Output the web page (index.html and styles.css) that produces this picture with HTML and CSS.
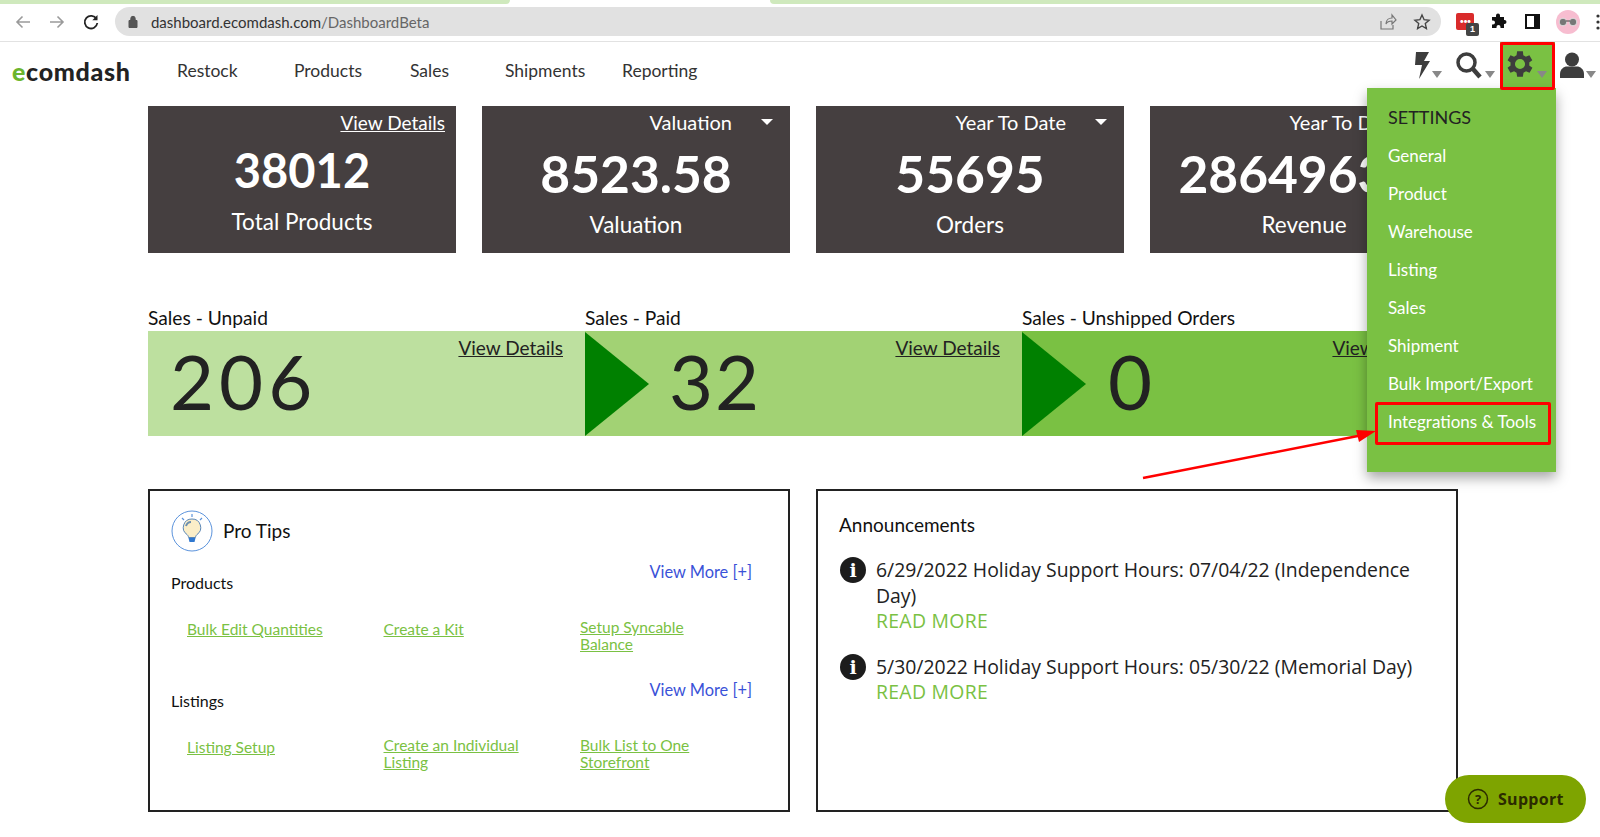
FILE: index.html
```html
<!DOCTYPE html>
<html lang="en">
<head>
<meta charset="utf-8">
<title>ecomdash Dashboard</title>
<link rel="stylesheet" href="styles.css">
</head>
<body>
<div class="tabstrip"><span class="tab-a"></span><span class="tab-b"></span></div>
<header class="chrome">
  <div class="chrome-nav">
    <svg class="ci" width="20" height="20" viewBox="0 0 20 20"><path d="M17 10H4M9.500 4.500L4 10l5.500 5.500" fill="none" stroke="#9a9a9a" stroke-width="1.600"/></svg>
    <svg class="ci" width="20" height="20" viewBox="0 0 20 20"><path d="M3 10h13M10.500 4.500L16 10l-5.500 5.500" fill="none" stroke="#9a9a9a" stroke-width="1.600"/></svg>
    <svg class="ci" width="20" height="20" viewBox="0 0 20 20"><path d="M15.500 7a6.300 6.300 0 1 0 .8 4" fill="none" stroke="#222" stroke-width="1.800"/><path d="M16.500 3v5.200h-5.200z" fill="#222"/></svg>
  </div>
  <div class="omnibox">
    <svg width="10" height="13" viewBox="0 0 10 13"><path d="M1 5.500h8v7H1zM2.800 5.500V3.500a2.200 2.200 0 0 1 4.400 0v2" fill="#555" stroke="#555" stroke-width="1"/></svg>
    <span class="url"><span class="url-host">dashboard.ecomdash.com</span>/DashboardBeta</span>
    <span class="omni-right">
      <svg width="18" height="18" viewBox="0 0 18 18"><path d="M2 8v8h12v-4M7 11c0-4 3-6 6-6V2l4 5-4 4V8c-3 0-5 1-6 3z" fill="none" stroke="#777" stroke-width="1.200"/></svg>
      <svg width="18" height="18" viewBox="0 0 18 18"><path d="M9 2l2.100 4.700 5 .5-3.800 3.400 1.100 5L9 13l-4.400 2.600 1.100-5L1.900 7.200l5-.5z" fill="none" stroke="#444" stroke-width="1.400"/></svg>
    </span>
  </div>
  <div class="ext">
    <span class="ext-red"><span class="ext-dots">•••</span><span class="ext-badge">1</span></span>
    <svg class="ext-puzzle" width="17" height="17" viewBox="0 0 17 17"><path fill="#111" d="M6 2.500a2 2 0 0 1 4 0V4h4v3h.5a2 2 0 0 1 0 4H14v4h-3.500v-1a2 2 0 0 0-4 0v1H2v-3.500h1a2 2 0 0 0 0-4H2V4h4z"/></svg>
    <svg class="ext-panel" width="15" height="15" viewBox="0 0 15 15"><path d="M1 1h13v13H1z" fill="#fff" stroke="#111" stroke-width="2"/><path d="M9 1h5v13H9z" fill="#111"/></svg>
    <span class="avatar"><svg width="20" height="10" viewBox="0 0 20 10"><circle cx="5" cy="5" r="3.800" fill="#777" stroke="#eee" stroke-width=".8"/><circle cx="15" cy="5" r="3.800" fill="#777" stroke="#eee" stroke-width=".8"/><path d="M8 4h4" stroke="#444"/></svg></span>
    <svg width="4" height="16" viewBox="0 0 4 16"><circle cx="2" cy="2" r="1.600" fill="#333"/><circle cx="2" cy="8" r="1.600" fill="#333"/><circle cx="2" cy="14" r="1.600" fill="#333"/></svg>
  </div>
</header>
<nav class="topnav">
  <a class="logo"><span class="logo-e">e</span>comdash</a>
  <div class="menu">
    <a class="m m1">Restock</a><a class="m m2">Products</a><a class="m m3">Sales</a><a class="m m4">Shipments</a><a class="m m5">Reporting</a>
  </div>
  <div class="tools">
    <span class="tool t-bolt"><svg width="18" height="27" viewBox="0 0 18 27"><path d="M3 0h13l-5 9h6L6 27l3-14H2z" fill="#3d3d3d"/></svg><i class="caret"></i></span>
    <span class="tool t-search"><svg width="26" height="27" viewBox="0 0 26 27"><circle cx="10.500" cy="10.500" r="8.500" fill="none" stroke="#3d3d3d" stroke-width="3.500"/><path d="M17 17l7 8" stroke="#3d3d3d" stroke-width="4.500"/></svg><i class="caret"></i></span>
    <span class="tool t-gear"><svg width="26" height="26" viewBox="4 3 18 18"><path fill="#3d3d3d" d="M19.400 13a7.500 7.500 0 0 0 0-2l2.100-1.600-2-3.500-2.500 1a7.500 7.500 0 0 0-1.700-1L15 3.200h-4L10.600 5.900a7.500 7.500 0 0 0-1.700 1l-2.500-1-2 3.500L6.500 11a7.500 7.500 0 0 0 0 2l-2.100 1.600 2 3.500 2.500-1a7.500 7.500 0 0 0 1.700 1l.4 2.700h4l.4-2.700a7.500 7.500 0 0 0 1.700-1l2.500 1 2-3.500zM13 15.500a3.500 3.500 0 1 1 0-7 3.500 3.500 0 0 1 0 7z"/></svg><i class="caret"></i></span>
    <span class="tool t-user"><svg width="24" height="26" viewBox="0 0 24 26"><circle cx="12" cy="7.500" r="7" fill="#3d3d3d"/><path d="M0 26v-4c0-5 4-7.500 7-7.500h10c3 0 7 2.500 7 7.500v4z" fill="#3d3d3d"/></svg><i class="caret"></i></span>
  </div>
</nav>
<main class="page">
  <section class="cards">
    <article class="card card-first">
      <div class="card-top"><a class="card-link">View Details</a></div>
      <div class="card-num">38012</div>
      <div class="card-label">Total Products</div>
    </article>
    <article class="card">
      <div class="card-top"><span>Valuation</span><i class="card-caret"></i></div>
      <div class="card-num">8523.58</div>
      <div class="card-label">Valuation</div>
    </article>
    <article class="card">
      <div class="card-top"><span>Year To Date</span><i class="card-caret"></i></div>
      <div class="card-num">55695</div>
      <div class="card-label">Orders</div>
    </article>
    <article class="card">
      <div class="card-top"><span>Year To Date</span><i class="card-caret"></i></div>
      <div class="card-num">2864963.5</div>
      <div class="card-label">Revenue</div>
    </article>
  </section>
  <section class="funnel">
    <div class="fcol">
      <h3 class="ftitle">Sales - Unpaid</h3>
      <div class="fbar f1"><span class="fnum fnum-first">206</span><a class="flink">View Details</a></div>
    </div>
    <div class="fcol">
      <h3 class="ftitle">Sales - Paid</h3>
      <div class="fbar f2"><i class="tri"></i><span class="fnum">32</span><a class="flink">View Details</a></div>
    </div>
    <div class="fcol">
      <h3 class="ftitle">Sales - Unshipped Orders</h3>
      <div class="fbar f3"><i class="tri"></i><span class="fnum">0</span><a class="flink">View Details</a></div>
    </div>
  </section>
  <section class="boxes">
    <div class="box tips">
      <div class="tips-head">
        <span class="bulb"><svg width="42" height="42" viewBox="0 0 42 42"><circle cx="21" cy="21" r="20" fill="#fff" stroke="#5b93dc" stroke-width="1"/><path d="M21 9a8.500 8.500 0 0 0-5 15.500c1 1 1.500 2 1.500 3h7c0-1 .5-2 1.500-3A8.500 8.500 0 0 0 21 9z" fill="#fbeec8" stroke="#5a87b8"/><path d="M17.500 28h7l-1 4h-5z" fill="#2f78d0"/><path d="M15 16c1-3 3-4 5-4" stroke="#6b8fb0" stroke-width="2" fill="none"/><path d="M21 4v3M11 8l2 2M31 8l-2 2" stroke="#5b93dc" stroke-width="1.200"/></svg></span>
        <span class="tips-title">Pro Tips</span>
      </div>
      <div class="tip-sec">
        <div class="tip-row"><span class="tip-name">Products</span><a class="more">View More [+]</a></div>
        <div class="tip-links">
          <a class="single">Bulk Edit Quantities</a><a class="single">Create a Kit</a><a>Setup Syncable Balance</a>
        </div>
      </div>
      <div class="tip-sec">
        <div class="tip-row"><span class="tip-name">Listings</span><a class="more">View More [+]</a></div>
        <div class="tip-links">
          <a class="single">Listing Setup</a><a>Create an Individual Listing</a><a>Bulk List to One Storefront</a>
        </div>
      </div>
    </div>
    <div class="box news">
      <h3 class="news-title">Announcements</h3>
      <div class="news-item">
        <i class="info">i</i>
        <div class="news-body">6/29/2022 Holiday Support Hours: 07/04/22 (Independence Day)<a class="read">READ MORE</a></div>
      </div>
      <div class="news-item">
        <i class="info">i</i>
        <div class="news-body">5/30/2022 Holiday Support Hours: 05/30/22 (Memorial Day)<a class="read">READ MORE</a></div>
      </div>
    </div>
  </section>
</main>
<aside class="dropdown">
  <div class="dd-title">SETTINGS</div>
  <a class="dd-item">General</a>
  <a class="dd-item">Product</a>
  <a class="dd-item">Warehouse</a>
  <a class="dd-item">Listing</a>
  <a class="dd-item">Sales</a>
  <a class="dd-item">Shipment</a>
  <a class="dd-item">Bulk Import/Export</a>
  <a class="dd-item">Integrations &amp; Tools</a>
</aside>
<div class="hl hl-gear"></div>
<div class="hl hl-item"></div>
<svg class="arrow" width="240" height="56" viewBox="0 0 240 56"><path d="M1 53L226 9" stroke="#f00" stroke-width="2.500"/><path d="M234 6l-20-1 3 12z" fill="#f00"/></svg>
<a class="support">
  <svg width="22" height="22" viewBox="0 0 22 22"><circle cx="11" cy="11" r="9.500" fill="none" stroke="#2b2b00" stroke-width="1.500"/><text x="11" y="15.500" text-anchor="middle" class="q">?</text></svg>
  <span>Support</span>
</a>
</body>
</html>
```
FILE: styles.css
```css
* { box-sizing: border-box; }
html, body { margin: 0; padding: 0; }
body {
  width: 1600px; height: 837px; overflow: hidden; position: relative;
  background: #fff; color: #111;
  font-family: Lato, "Liberation Sans", sans-serif;
}
a { color: inherit; }
h3 { margin: 0; font-weight: 400; }

.tabstrip { height: 4px; display: flex; background: #fff; }
.tab-a { width: 510px; background: #cfe9bd; border-radius: 0 0 6px 0; }
.tab-b { flex: 1; margin-left: 260px; background: #cfe9bd; border-radius: 0 0 0 6px; }

.chrome { height: 38px; display: flex; align-items: center; padding: 0 0 2px 13px; border-bottom: 1px solid #e2e2e2; }
.chrome-nav { display: flex; gap: 14px; width: 102px; }
.omnibox {
  width: 1327px; height: 29px; background: #e1e1e1; border-radius: 15px;
  display: flex; align-items: center; padding: 0 10px 0 13px; gap: 13px;
}
.url { font-size: 15px; color: #666; }
.url-host { color: #333; }
.omni-right { margin-left: auto; display: flex; gap: 16px; }
.ext { display: flex; align-items: center; margin-left: 15px; gap: 16px; }
.ext-red { width: 18px; height: 17px; background: #d92b2b; border-radius: 2px; position: relative; color: #fff; font-size: 8px; line-height: 17px; text-align: center; }
.ext-dots { letter-spacing: -1px; }
.ext-badge { position: absolute; left: 10px; top: 10px; width: 13px; height: 13px; background: #444; color: #fff; font: 700 9px/13px "Liberation Sans", sans-serif; border-radius: 2px; }
.ext-panel { margin-left: 2px; }
.avatar { width: 24px; height: 24px; border-radius: 50%; background: #f7bdd0; display: flex; align-items: center; justify-content: center; }

.topnav { height: 64px; display: flex; align-items: center; position: relative; padding-bottom: 7px; }
.logo { width: 177px; padding-left: 12px; font-weight: 900; font-size: 25px; letter-spacing: .7px; color: #222; }
.logo-e { color: #6cb52d; }
.menu { display: flex; font-size: 17.500px; color: #333; }
.m1 { width: 117px; } .m2 { width: 116px; } .m3 { width: 95px; } .m4 { width: 117px; } .m5 { width: 80px; }

.tools { margin-left: auto; display: flex; align-self: flex-start; height: 48px; align-items: flex-start; }
.tool { position: relative; display: flex; height: 48px; padding-top: 10px; }
.caret { position: absolute; width: 0; height: 0; top: 29px; border: 5px solid transparent; border-top: 7px solid #888; border-bottom: 0; }
.t-bolt { width: 43px; } .t-bolt .caret { left: 19px; }
.t-search { width: 44px; } .t-search .caret { left: 29px; }
.t-gear { width: 55px; background: #7ac143; padding-left: 7px; padding-top: 9px; } .t-gear .caret { left: 37px; }
.t-user { width: 45px; padding-left: 5px; } .t-user .caret { left: 31px; }

.page { padding-left: 148px; width: 1610px; }
.cards { display: grid; grid-template-columns: repeat(4, 308px); gap: 26px; }
.card { height: 147px; background: #453f40; color: #fff; text-align: center; padding: 3px 11px 0 0; display: flex; flex-direction: column; overflow: hidden; }
.card-top { height: 24px; display: flex; justify-content: flex-end; align-items: center; font-size: 20px; gap: 29px; margin-top: 1px; }
.card-link { text-decoration: underline; font-size: 19px; }
.card-caret { width: 0; height: 0; border: 6px solid transparent; border-top: 6px solid #fff; border-bottom: 0; margin-right: 6px; }
.card-num { font-size: 51.500px; font-weight: 700; line-height: 62px; padding-left: 11px; margin-top: 8px; white-space: nowrap; }
.card-first .card-num { margin-top: 5px; font-size: 47px; }
.card-label { font-size: 22.500px; line-height: 30px; padding-left: 11px; margin-top: 6px; }
.card-first .card-label { margin-top: 6px; }

.funnel { display: flex; margin-top: 54px; width: 1311px; }
.fcol { width: 437px; }
.ftitle { font-size: 19.200px; line-height: 22px; margin-bottom: 2px; color: #111; }
.fbar { height: 105px; position: relative; display: flex; align-items: center; color: #222; }
.f1 { background: #bde09f; } .f2 { background: #a2d274; } .f3 { background: #7ac143; }
.tri { width: 0; height: 0; border-top: 52.500px solid transparent; border-bottom: 52.500px solid transparent; border-left: 64px solid #008000; }
.fnum { font-size: 76px; margin-left: 20px; line-height: 99px; padding-bottom: 6px; height: 105px; letter-spacing: 2px; }
.fnum-first { margin-left: 22px; letter-spacing: 5px; }
.f3 .fnum { margin-left: 22px; }
.flink { position: absolute; right: 22px; top: 5px; font-size: 19px; text-decoration: underline; }

.boxes { display: flex; gap: 26px; margin-top: 53px; }
.box { width: 642px; height: 323px; border: 2px solid #222; background: #fff; }
.tips { padding: 19px 36px 0 21px; }
.tips-head { display: flex; align-items: center; gap: 10px; height: 42px; }
.bulb { display: flex; }
.tips-title { font-size: 19px; padding-bottom: 2px; }
.tip-sec { height: 118px; }
.tip-row { display: flex; justify-content: space-between; align-items: flex-start; padding-top: 9px; height: 67px; font-size: 16px; }
.tip-name { margin-top: 12px; }
.more { color: #3a52d8; font-size: 16.400px; margin-top: 1px; }
.tip-links { display: grid; grid-template-columns: 196.500px 196.500px 130px; padding-left: 16px; align-items: start; font-size: 15.500px; line-height: 17px; color: #7ac143; height: 36px; }
.tip-links a { text-decoration: underline; max-width: 150px; }
.tip-links .single { margin-top: 2px; }

.news { padding: 21px 21px 0 21px; }
.news-title { font-size: 19px; line-height: 26px; margin-bottom: 19px; }
.news-item { display: flex; gap: 10px; margin-bottom: 20px; }
.info { width: 26px; height: 26px; flex: none; margin-left: 1px; border-radius: 50%; background: #1c1c1c; color: #fff; font: 700 19px/26px "DejaVu Serif", serif; text-align: center; }
.news-body { font-family: "Open Sans", sans-serif; font-size: 19.400px; line-height: 25.500px; color: #222; }
.read { display: block; color: #7ac143; letter-spacing: .3px; }

.dropdown {
  position: absolute; left: 1367px; top: 88px; width: 189px; height: 384px;
  background: #7ac143; box-shadow: 0 6px 12px rgba(0,0,0,.35);
  padding: 17px 21px 0; display: flex; flex-direction: column;
}
.dd-title { color: #222; font-size: 18px; line-height: 24px; height: 39px; }
.dd-item { color: #fff; font-size: 17px; line-height: 24px; height: 38px; white-space: nowrap; }

.hl { position: absolute; border: 3px solid #f00; border-radius: 2px; }
.hl-gear { left: 1500px; top: 42px; width: 55px; height: 48px; }
.hl-item { left: 1375px; top: 402px; width: 176px; height: 43px; }
.arrow { position: absolute; left: 1142px; top: 425px; }

.support {
  position: absolute; left: 1445px; top: 775px; width: 141px; height: 48px;
  background: #7ea400; border-radius: 24px; display: flex; align-items: center; gap: 9px; padding-left: 22px;
  font: 700 16px "Open Sans", sans-serif; letter-spacing: .3px; color: #2b2b00;
}
.q { font: 700 13px "Open Sans", sans-serif; fill: #2b2b00; letter-spacing: 0; }
```
